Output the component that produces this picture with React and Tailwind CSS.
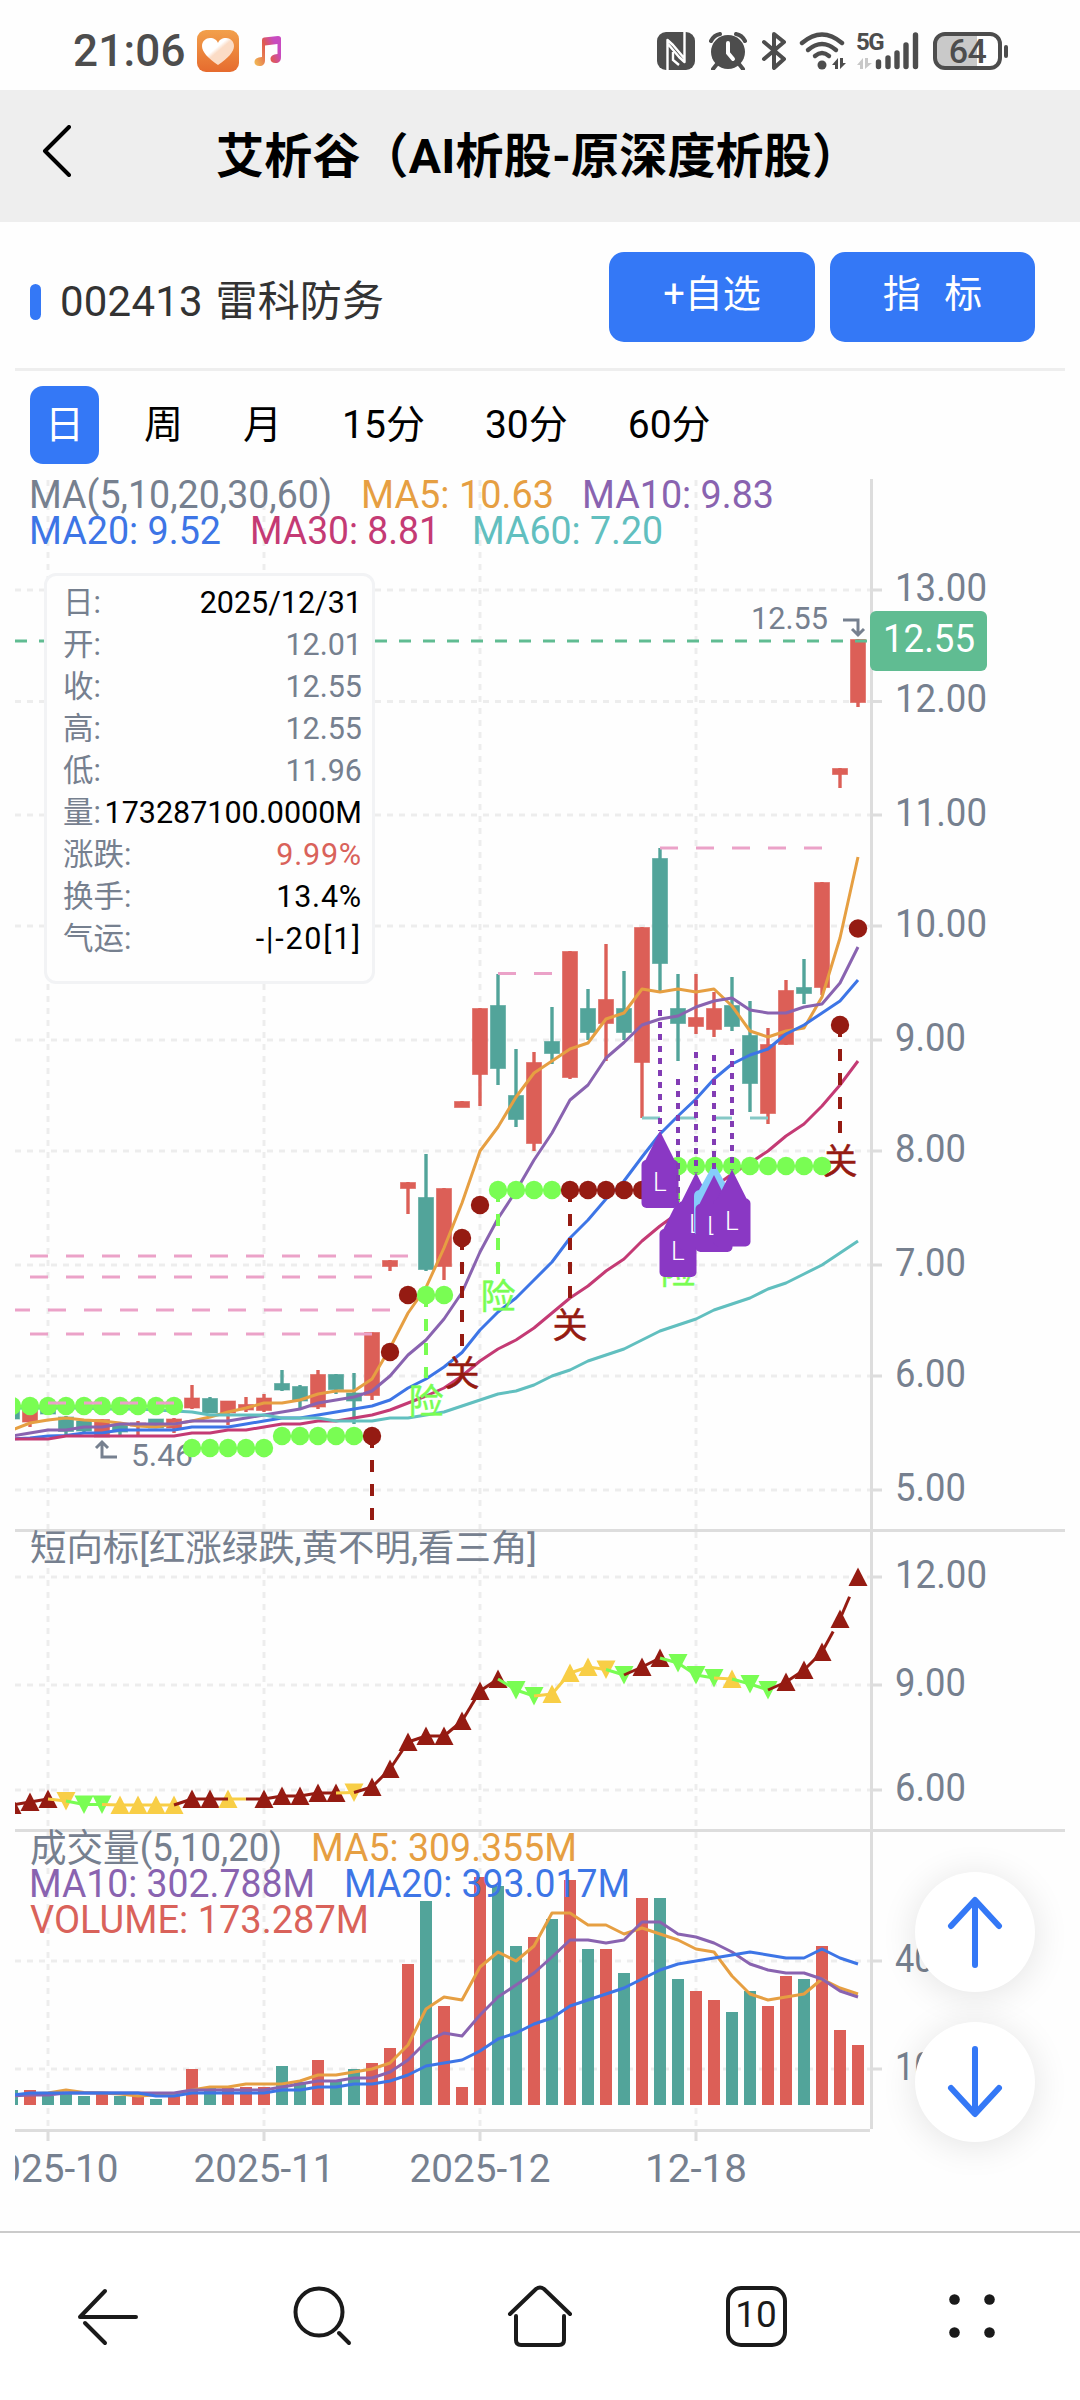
import React from "react";

const UP = "#DC5F57";
const DOWN = "#52A49A";
const AXIS = "#76808F";
const DARK = "#951B12";
const LIME = "#79FD53";
const YELLOW = "#F8CE46";
const PURPLE = "#8A38C4";

const COLORS = {
  ma5: "#E69F42",
  ma10: "#8963B0",
  ma20: "#3D75E6",
  ma30: "#C43A74",
  ma60: "#61BFBF",
};

// first visible bar is index -2, bars are 18px apart
const FIRST = -2;
const barX = (k) => 48 + k * 18;

// [direction, body top, body bottom, high, low]
const CANDLES = [
  ["d", 1408, 1419, 1405, 1419],
  ["u", 1408, 1422, 1405, 1427],
  ["d", 1410, 1414, 1405, 1414],
  ["d", 1417, 1431.5, 1416, 1435],
  ["d", 1421, 1431, 1420, 1432],
  ["u", 1419.5, 1437, 1419, 1437],
  ["d", 1425, 1432, 1424, 1435],
  ["u", 1423, 1426, 1421, 1435],
  ["d", 1419, 1428, 1419, 1428],
  ["u", 1419, 1428, 1418, 1433],
  ["u", 1398, 1408, 1385, 1409],
  ["d", 1398.5, 1413, 1397, 1413],
  ["u", 1401, 1413, 1401, 1425],
  ["u", 1404.5, 1410, 1397, 1412],
  ["u", 1398, 1410.5, 1394, 1412],
  ["d", 1383.5, 1390, 1370, 1391],
  ["d", 1386.5, 1401, 1385, 1408],
  ["u", 1374.5, 1407, 1370, 1409],
  ["d", 1374.5, 1389.5, 1374, 1394],
  ["d", 1393, 1401, 1373, 1424],
  ["u", 1332.5, 1395.5, 1332.5, 1400],
  ["u", 1260.5, 1266.5, 1260, 1271],
  ["u", 1182.5, 1188.5, 1182, 1214],
  ["d", 1197.5, 1269.5, 1154, 1271],
  ["u", 1188.5, 1266.5, 1188, 1280],
  ["u", 1101.5, 1107.5, 1101, 1107],
  ["u", 1008.5, 1074.5, 1008, 1106],
  ["d", 1005.5, 1068.5, 974, 1085],
  ["d", 1095.5, 1119.5, 1049, 1127],
  ["u", 1062.5, 1143.5, 1052, 1151],
  ["d", 1041.5, 1053.5, 1007, 1064],
  ["u", 951.5, 1077.5, 951, 1079],
  ["d", 1008.5, 1032.5, 989, 1040],
  ["u", 999.5, 1023.5, 944, 1061],
  ["d", 1008.5, 1032.5, 971, 1040],
  ["u", 927.5, 1062.5, 927, 1118],
  ["d", 858.5, 963.5, 848, 991],
  ["d", 1008.5, 1023.5, 974, 1061],
  ["u", 1017.5, 1026.5, 974, 1034],
  ["u", 1008.5, 1029.5, 992, 1037],
  ["d", 1005.5, 1026.5, 977, 1031],
  ["d", 1035.5, 1083.5, 1001, 1112],
  ["u", 1044.5, 1113.5, 1028, 1124],
  ["u", 990.5, 1044.5, 980, 1045],
  ["d", 987.5, 993.5, 959, 1004],
  ["u", 882.5, 987.5, 882, 995],
  ["u", 768.5, 774.5, 768, 788],
  ["u", 639.5, 702.5, 639, 707],
];

const PRICE_LINES = {
  ma5: [1430, 1423, 1420, 1418, 1420, 1421, 1423, 1426, 1427, 1424, 1421, 1417, 1412, 1408, 1403, 1403, 1400, 1394, 1391, 1391, 1379, 1348, 1313, 1287.5, 1248, 1203, 1151, 1127, 1097, 1073, 1061, 1049, 1043, 1019, 1013, 989, 992, 989, 992, 989, 1006, 1031, 1037, 1031, 1028, 997, 938, 857],
  ma10: [1436, 1433, 1430, 1430, 1427, 1427, 1424, 1424, 1424, 1424, 1421, 1421, 1421, 1418, 1415, 1412, 1409, 1403, 1400, 1397, 1391, 1376, 1355, 1340, 1319, 1292.5, 1252, 1218.5, 1191, 1160, 1133, 1100, 1085, 1058, 1042.5, 1025, 1019, 1016, 1007, 1001, 998, 1010, 1013, 1013, 1007, 1004, 983, 947],
  ma20: [1439, 1438, 1436, 1435.5, 1433, 1433, 1430, 1430, 1430, 1430, 1427, 1427, 1427, 1424, 1421, 1418, 1418, 1415, 1412, 1409, 1406, 1400, 1388, 1379, 1367, 1352.5, 1330, 1312, 1298, 1280, 1262, 1238, 1220, 1199, 1181, 1157, 1134, 1116, 1099, 1079, 1064, 1055, 1049, 1034, 1025, 1013, 1001, 980],
  ma30: [1439, 1439, 1439, 1436, 1436, 1436, 1436, 1436, 1436, 1436, 1433, 1433, 1430, 1430, 1427, 1424, 1424, 1421, 1421, 1418, 1415, 1410, 1403, 1396, 1388, 1376, 1361, 1349, 1340, 1328, 1313, 1298, 1286, 1271, 1259, 1241, 1226, 1213, 1201, 1187, 1174, 1163, 1151, 1136, 1124, 1106, 1085, 1061],
  ma60: [1408, 1408, 1408, 1408, 1408, 1409, 1409, 1409, 1410, 1411, 1412, 1415, 1415, 1415, 1415, 1418, 1418, 1418, 1421, 1421, 1421, 1418, 1418, 1415, 1412, 1406, 1400, 1394, 1391, 1385, 1376, 1370, 1361, 1355, 1349, 1340, 1331, 1325, 1319, 1310, 1304, 1298, 1289, 1283, 1274, 1265, 1253, 1241],
};

const VOLUMES = [2090, 2090, 2096, 2094, 2096, 2093, 2096, 2096, 2099, 2095, 2069, 2088, 2088, 2087, 2087, 2066, 2082, 2060, 2081, 2069, 2063, 2048, 1964, 1901, 2006, 2087, 1877, 1886, 1946, 1937, 1919, 1880, 1949, 1949, 1973, 1898, 1898, 1979, 1991, 2000, 2012, 1991, 2006, 1976, 1979, 1946, 2030, 2045];

const VOLUME_LINES = {
  ma5: [2096, 2094, 2093, 2090, 2092.5, 2093, 2094, 2096, 2095, 2094, 2090, 2087, 2087, 2084, 2084, 2084, 2081, 2075, 2075, 2072, 2069, 2063, 2045, 2009, 1997, 2000, 1967, 1952, 1961, 1946, 1913, 1913, 1925, 1925, 1934, 1928, 1934, 1940, 1949, 1952, 1976, 1994, 2000, 1997, 1994, 1979, 1988, 1994],
  ma10: [2096, 2095, 2095, 2093, 2093, 2093, 2093, 2093, 2093, 2093, 2090, 2090, 2090, 2090, 2090, 2087, 2084, 2081, 2081, 2078, 2078, 2072, 2060, 2042, 2033, 2036, 2015, 1997, 1985, 1973, 1957, 1940, 1940, 1943, 1940, 1922, 1922, 1934, 1937, 1943, 1952, 1964, 1970, 1973, 1973, 1979, 1991, 1997],
  ma20: [2095, 2093, 2093, 2093, 2093, 2093, 2093, 2093, 2096, 2096, 2093, 2093, 2093, 2093, 2093, 2090, 2090, 2087, 2087, 2084, 2084, 2081, 2075, 2066, 2063, 2060, 2051, 2039, 2033, 2024, 2018, 2006, 2000, 1994, 1988, 1979, 1970, 1964, 1961, 1958, 1955, 1952, 1955, 1958, 1958, 1949, 1958, 1964],
};

// [index, y, color, shape], shape is u / d / empty when there is no marker
const TREND = [
  [-2, 1805, DARK, "u"], [-1, 1802, DARK, "u"], [0, 1799, DARK, "u"], [1, 1801, YELLOW, "d"],
  [2, 1804.5, LIME, "d"], [3, 1804.5, LIME, "d"], [4, 1805, YELLOW, "u"], [5, 1805, YELLOW, "u"],
  [6, 1805, YELLOW, "u"], [7, 1805, YELLOW, "u"], [8, 1799, DARK, "u"], [9, 1799, DARK, "u"],
  [10, 1799, DARK, "u", YELLOW], [11, 1799, YELLOW, ""], [12, 1799, DARK, "u"], [13, 1796, DARK, "u"],
  [14, 1796, DARK, "u"], [15, 1793, DARK, "u"], [16, 1793, DARK, "u"], [17, 1792.5, YELLOW, "d"],
  [18, 1787, DARK, "u"], [19, 1769, DARK, "u"], [20, 1742, DARK, "u"], [21, 1736, DARK, "u"],
  [22, 1736, DARK, "u"], [23, 1721, DARK, "u"], [24, 1691, DARK, "u"], [25, 1679, DARK, "u"],
  [26, 1690, LIME, "d"], [27, 1696, LIME, "d"], [28, 1694, YELLOW, "u"], [29, 1673, YELLOW, "u"],
  [30, 1667, YELLOW, "u"], [31, 1669.5, YELLOW, "d"], [32, 1675, LIME, "d"], [33, 1667, DARK, "u"],
  [34, 1658, DARK, "u"], [35, 1663, LIME, "d"], [36, 1675, LIME, "d"], [37, 1678, LIME, "d"],
  [38, 1679, YELLOW, "u"], [39, 1684, LIME, "d"], [40, 1690, LIME, "d"], [41, 1682, DARK, "u"],
  [42, 1670, DARK, "u"], [43, 1652, DARK, "u"], [44, 1619, DARK, "u"], [45, 1577, DARK, "u"],
];

// [from index, to index, y, color]
const DOTS = [
  [-2, 7, 1406, LIME],
  [8, 12, 1448, LIME],
  [13, 17, 1436, LIME],
  [18, 18, 1436, DARK],
  [19, 19, 1352, DARK],
  [20, 20, 1295, DARK],
  [21, 22, 1295, LIME],
  [23, 23, 1238, DARK],
  [24, 24, 1205, DARK],
  [25, 28, 1190, LIME],
  [29, 34, 1190, DARK],
  [35, 43, 1166, LIME],
  [44, 44, 1025, DARK],
  [45, 45, 928.5, DARK],
];

// [index, line start, line end, label, label baseline, color]
const SIGNALS = [
  [18, 1436, 1520, "", 0, DARK],
  [21, 1295, 1378, "险", 1414, LIME],
  [23, 1238, 1346, "关", 1386, DARK],
  [25, 1190, 1274, "险", 1309, LIME],
  [29, 1190, 1298, "关", 1338, DARK],
  [35, 1166, 1250, "险", 1284, LIME],
  [44, 1025, 1133, "关", 1173.5, DARK],
];

// [x1, x2, y]
const RESISTANCE = [
  [30, 408, 1256],
  [30, 372, 1277],
  [12, 390, 1310],
  [30, 372, 1334],
  [48, 174, 1403],
  [498, 552, 973.5],
  [660, 822, 848],
];

// [index, dash start, tip y]
const TAGS = [
  [34, 1010, 1131],
  [35, 1079, 1200],
  [36, 1052, 1172.5],
  [37, 1055, 1175],
  [38, 1049, 1169.5],
];

const PRICE_AXIS = [
  ["13.00", 590], ["12.00", 701.5], ["11.00", 815], ["10.00", 926],
  ["9.00", 1040], ["8.00", 1151], ["7.00", 1265], ["6.00", 1376], ["5.00", 1490],
];
const TREND_AXIS = [["12.00", 1577], ["9.00", 1685], ["6.00", 1790]];
const VOLUME_AXIS = [["400M", 1961], ["100M", 2069]];
const DATES = [["2025-10", 48], ["2025-11", 264], ["2025-12", 480], ["12-18", 696]];

const DETAILS = [
  ["日:", "2025/12/31", "text-black"],
  ["开:", "12.01", "text-[#76808F]"],
  ["收:", "12.55", "text-[#76808F]"],
  ["高:", "12.55", "text-[#76808F]"],
  ["低:", "11.96", "text-[#76808F]"],
  ["量:", "173287100.0000M", "text-black"],
  ["涨跌:", "9.99%", "text-[#D9625A] tracking-[0.8px]"],
  ["换手:", "13.4%", "text-black tracking-[0.8px]"],
  ["气运:", "-|-20[1]", "text-black tracking-[1.8px]"],
];

const points = (ys) => ys.map((y, i) => `${barX(i + FIRST)},${y}`).join(" ");

function Label({ x, y, w, size = 38, fill = AXIS, children }) {
  return (
    <text x={x} y={y} fontSize={size} fill={fill} textLength={w} lengthAdjust="spacingAndGlyphs">
      {children}
    </text>
  );
}

function Grid({ rows, top, bottom }) {
  return (
    <g stroke="#EDEDED" strokeWidth="3" strokeDasharray="6 6">
      {rows.map(([, y]) => (
        <line key={y} x1="15" x2="870" y1={y} y2={y} />
      ))}
      {DATES.map(([, x]) => (
        <line key={x} x1={x} x2={x} y1={top} y2={bottom} />
      ))}
    </g>
  );
}

function AxisLabels({ rows }) {
  return rows.map(([label, y]) => (
    <g key={y}>
      <line x1="871" x2="882" y1={y} y2={y} stroke="#DDDDDD" strokeWidth="3" />
      <Label x={895} y={y + 10.5} w={label.length === 5 ? 92 : label.length === 4 && !label.includes("M") ? 71 : 88}>
        {label}
      </Label>
    </g>
  ));
}

function Tag({ k, from, tip }) {
  const x = barX(k);
  return (
    <g>
      <line x1={x} x2={x} y1={from} y2={tip} stroke="#823CB4" strokeWidth="4" strokeDasharray="6 6" />
      <path d={`M${x} ${tip}L${x + 15} ${tip + 30}H${x - 15}Z`} fill={PURPLE} />
      <rect x={x - 18.5} y={tip + 29} width="37" height="48" rx="5" fill={PURPLE} />
      <text x={x - 7} y={tip + 60} fontSize="26" fontWeight="300" fill="#fff">L</text>
    </g>
  );
}

function TrendPanel() {
  return (
    <g strokeWidth="3">
      {TREND.map(([k, y, color, shape, own]) => {
        const x = barX(k);
        if (!shape) return null;
        const d = shape === "u"
          ? `M${x} ${y - 9.5}L${x + 9.5} ${y + 9}H${x - 9.5}Z`
          : `M${x} ${y + 9.5}L${x + 9.5} ${y - 9}H${x - 9.5}Z`;
        return <path key={k} d={d} fill={own || color} stroke="none" />;
      })}
      {TREND.slice(1).map(([k, y, color], i) => {
        const prev = TREND[i];
        const part = k === 44 ? 0.62 : k === 45 ? 0.53 : 1;
        return (
          <line
            key={k}
            x1={barX(prev[0])}
            y1={prev[1]}
            x2={barX(prev[0]) + 18 * part}
            y2={prev[1] + (y - prev[1]) * part}
            stroke={color}
          />
        );
      })}
    </g>
  );
}

function Chart() {
  return (
    <svg
      className="block h-[1725px] w-[1050px] font-['Roboto','Noto_Sans_CJK_SC',sans-serif]"
      viewBox="15 475 1050 1725"
    >
      <defs>
        <clipPath id="plot">
          <rect x="15" y="475" width="1050" height="1725" />
        </clipPath>
      </defs>

      <Grid rows={PRICE_AXIS} top={480} bottom={1529} />
      <Grid rows={TREND_AXIS} top={1532} bottom={1829} />
      <Grid rows={VOLUME_AXIS} top={1832} bottom={2129} />

      <g stroke="#DDDDDD" strokeWidth="3">
        <line x1="15" x2="1065" y1="1530.5" y2="1530.5" />
        <line x1="15" x2="1065" y1="1830.5" y2="1830.5" />
        <line x1="15" x2="870" y1="2130.5" y2="2130.5" />
        <line x1="871.5" x2="871.5" y1="479" y2="2129" />
        {DATES.map(([, x]) => (
          <line key={x} x1={x} x2={x} y1="2132" y2="2141" />
        ))}
      </g>

      <AxisLabels rows={PRICE_AXIS} />
      <AxisLabels rows={TREND_AXIS} />
      <AxisLabels rows={VOLUME_AXIS} />

      <g clipPath="url(#plot)">
        {CANDLES.map(([dir, top, bottom, high, low], i) => {
          const x = barX(i + FIRST);
          const color = dir === "u" ? UP : DOWN;
          return (
            <g key={i}>
              <line x1={x} x2={x} y1={high} y2={low} stroke={color} strokeWidth="3.4" />
              <rect x={x - 7.5} y={top} width="15" height={bottom - top} fill={color} stroke={color} strokeOpacity="0.6" />
            </g>
          );
        })}

        <Label x={131} y={1466} w={62} size={31}>5.46</Label>
        <Label x={751} y={629} w={77} size={31}>12.55</Label>
        <g fill="none" stroke={AXIS} strokeWidth="3">
          <path d="M117 1457H102V1442M96 1448L102 1442L108 1448" />
          <path d="M843 620H858V635M852 629L858 635L864 629" />
        </g>

        <g fill="none" strokeWidth="3" strokeLinejoin="round">
          {Object.keys(PRICE_LINES).map((name) => (
            <polyline key={name} points={points(PRICE_LINES[name])} stroke={COLORS[name]} />
          ))}
        </g>

        {SIGNALS.map(([k, from, to, label, base, color]) => (
          <g key={k}>
            <line x1={barX(k)} x2={barX(k)} y1={from} y2={to} stroke={color} strokeWidth="4" strokeDasharray="12 12" />
            <text x={barX(k)} y={base} fontSize="35" textAnchor="middle" fill={color} stroke={color} strokeWidth="0.5">
              {label}
            </text>
          </g>
        ))}

        {DOTS.map(([from, to, y, color]) =>
          Array.from({ length: to - from + 1 }, (_, i) => (
            <circle key={`${from}-${i}`} cx={barX(from + i)} cy={y} r="9.2" fill={color} />
          ))
        )}

        <g stroke="#EBA2C8" strokeWidth="3" strokeDasharray="18 18">
          {RESISTANCE.map(([x1, x2, y]) => (
            <line key={y} x1={x1} x2={x2} y1={y} y2={y} />
          ))}
          <line x1="642" x2="768" y1="1118" y2="1118" stroke="#85C8C6" />
        </g>

        {TAGS.slice(0, 3).map(([k, from, tip]) => (
          <Tag key={k} k={k} from={from} tip={tip} />
        ))}
        <path d="M714 1163L730 1192H732V1235H699Q694 1235 694 1230V1196Q694 1191 699 1190Z" fill="#85CCFA" />
        {TAGS.slice(3).map(([k, from, tip]) => (
          <Tag key={k} k={k} from={from} tip={tip} />
        ))}
      </g>

      <line x1="15" x2="868" y1="641" y2="641" stroke="#60BC92" strokeWidth="3" strokeDasharray="12 12" />
      <rect x="870" y="611" width="117" height="60" rx="6" fill="#60BC92" />
      <Label x={883} y={652} w={92} fill="#fff">12.55</Label>

      <Label x={29} y={508} w={303}>MA(5,10,20,30,60)</Label>
      <Label x={361} y={508} w={193} fill={COLORS.ma5}>MA5: 10.63</Label>
      <Label x={582} y={508} w={192} fill={COLORS.ma10}>MA10: 9.83</Label>
      <Label x={29} y={544} w={192} fill={COLORS.ma20}>MA20: 9.52</Label>
      <Label x={250} y={544} w={190} fill={COLORS.ma30}>MA30: 8.81</Label>
      <Label x={472} y={544} w={191} fill={COLORS.ma60}>MA60: 7.20</Label>

      <Label x={30} y={1561} w={507} size={36}>短向标[红涨绿跌,黄不明,看三角]</Label>
      <g clipPath="url(#plot)">
        <TrendPanel />
      </g>

      <g clipPath="url(#plot)">
        {VOLUMES.map((y, i) => (
          <rect key={i} x={barX(i + FIRST) - 6} y={y} width="12" height={2105 - y} fill={CANDLES[i][0] === "u" ? UP : DOWN} />
        ))}
        <g fill="none" strokeWidth="3" strokeLinejoin="round">
          {Object.keys(VOLUME_LINES).map((name) => (
            <polyline key={name} points={points(VOLUME_LINES[name])} stroke={COLORS[name]} />
          ))}
        </g>
      </g>
      <Label x={30} y={1861} w={252}>成交量(5,10,20)</Label>
      <Label x={311} y={1861} w={266} fill={COLORS.ma5}>MA5: 309.355M</Label>
      <Label x={29} y={1897} w={286} fill={COLORS.ma10}>MA10: 302.788M</Label>
      <Label x={344} y={1897} w={286} fill={COLORS.ma20}>MA20: 393.017M</Label>
      <Label x={30} y={1933} w={339} fill="#D9625A">VOLUME: 173.287M</Label>

      {DATES.map(([label, x]) => {
        const w = label.length === 7 ? 141 : 102;
        return <Label key={label} x={x - w / 2} y={2182} w={w}>{label}</Label>;
      })}
    </svg>
  );
}

function DetailCard() {
  return (
    <div className="absolute left-[29px] top-[98px] h-[411px] w-[331px] rounded-[12px] border-[3px] border-[#F2F3F5] bg-[#FEFEFE] pl-[16px] pr-[10px] pt-[6px]">
      {DETAILS.map(([name, value, tone]) => (
        <div key={name} className="flex h-[42px] items-center justify-between whitespace-nowrap text-[30.5px] leading-[42px]">
          <span className="text-[#76808F]">{name}</span>
          <span className={tone}>{value}</span>
        </div>
      ))}
    </div>
  );
}

function StatusBar() {
  return (
    <div className="flex h-[90px] items-center pt-[12px] pl-[73px] pr-[72px] text-[#4D4D4D]">
      <span className="text-[44px] font-medium leading-none tracking-[0.2px]">21:06</span>
      <svg className="ml-[11px] h-[42px] w-[42px]" viewBox="0 0 42 42">
        <defs>
          <linearGradient id="app" x1="0" y1="0" x2="0" y2="1">
            <stop offset="0" stopColor="#F2A04B" />
            <stop offset="1" stopColor="#E66B2E" />
          </linearGradient>
          <linearGradient id="heart" x1="0" y1="0" x2="1" y2="1">
            <stop offset="0.4" stopColor="#fff" />
            <stop offset="0.5" stopColor="#FBDCC6" />
          </linearGradient>
        </defs>
        <rect width="42" height="42" rx="9" fill="url(#app)" />
        <path d="M21 35C11 28 5 22 5 16C5 11 9 8 13 8C17 8 20 10 21 13C22 10 25 8 29 8C33 8 37 11 37 16C37 22 31 28 21 35Z" fill="url(#heart)" />
      </svg>
      <svg className="ml-[15px] h-[30px] w-[28px]" viewBox="0 0 28 30">
        <defs>
          <linearGradient id="note" x1="0" y1="0.8" x2="1" y2="0.3">
            <stop offset="0" stopColor="#F0B354" />
            <stop offset="0.5" stopColor="#E05A4E" />
            <stop offset="0.85" stopColor="#C84BC0" />
          </linearGradient>
        </defs>
        <path d="M8 4Q8 2 10 1.6L24 0Q27 0 27 2.5V21C27 25 25 27 21.5 27C18.500 27 16.500 25.500 16.500 23C16.500 20 19 18.500 23.500 18V8L11 9.500V24C11 28 9 30 5.500 30C2.500 30 0.500 28.500 0.500 26C0.500 23 3 21.500 8 21Z" fill="url(#note)" />
      </svg>

      <div className="ml-auto flex items-center">
        <svg className="h-[38px] w-[38px]" viewBox="0 0 38 38">
          <rect width="38" height="38" rx="9" fill="currentColor" />
          <path d="M10.500 38V8L16 13L27 26M27.500 0V30L22 25L11 12" fill="none" stroke="#fff" strokeWidth="2.400" strokeLinejoin="round" />
          <path d="M16 20V28L22 33" fill="none" stroke="#fff" strokeWidth="2.400" />
        </svg>
        <svg className="ml-[14px] h-[38px] w-[38px]" viewBox="0 0 38 38">
          <circle cx="19" cy="20" r="17" fill="currentColor" />
          <path d="M2 9Q5 3 11 2M27 2Q33 3 36 9M8 32L4 37M30 32L34 37" fill="none" stroke="currentColor" strokeWidth="4" strokeLinecap="round" />
          <path d="M19 11V21L24 27" fill="none" stroke="#fff" strokeWidth="4" strokeLinecap="round" />
        </svg>
        <svg className="ml-[14px] h-[38px] w-[26px]" viewBox="0 0 26 38">
          <path d="M3 10L23 27L13 36V2L23 10L3 27" fill="none" stroke="currentColor" strokeWidth="4" strokeLinecap="round" strokeLinejoin="round" />
        </svg>
        <svg className="ml-[12px] h-[38px] w-[48px]" viewBox="0 0 48 38">
          <g fill="none" stroke="currentColor" strokeWidth="4.400" strokeLinecap="round">
            <path d="M3 11Q23 -6 43 11" />
            <path d="M9 18Q23 6 37 18" />
            <path d="M16 24Q23 18 30 24" />
          </g>
          <circle cx="23" cy="33" r="4.500" fill="currentColor" />
          <path d="M33 33L39 26V37H36V33ZM41 26V37L47 31H44V26Z" fill="currentColor" />
        </svg>
        <div className="relative ml-[10px] h-[38px] w-[62px]">
          <span className="absolute -left-px top-0 text-[24px] font-bold leading-[20px] tracking-[-1.6px]">5G</span>
          <svg className="h-[38px] w-[62px]" viewBox="0 0 62 38">
            <path d="M0 33L6 26V37H3V33ZM8 26V37L15 31H11V26Z" fill="#C8C8C8" />
            <g stroke="currentColor" strokeWidth="5.400" strokeLinecap="round">
              <path d="M21.500 30V34.500M31 26V34.500M40 21V34.500M49 13V34.500M58.500 3V34.500" />
            </g>
          </svg>
        </div>
        <div className="ml-[14px] flex h-[38px] w-[69px] items-center justify-center rounded-[12px] border-[4px] border-[#4D4D4D] bg-linear-to-r from-[#C9C9C9] from-65% to-white to-65% text-[34px] font-medium leading-none tracking-[-0.5px]">
          64
        </div>
        <div className="ml-[2px] h-[13px] w-[4px] rounded-full bg-[#4D4D4D]" />
      </div>
    </div>
  );
}

function RoundButton({ d }) {
  return (
    <button className="flex h-[120px] w-[120px] items-center justify-center rounded-full bg-white shadow-[0_4px_36px_rgba(0,0,0,0.11)]">
      <svg className="h-[72px] w-[60px]" viewBox="0 0 60 72">
        <path d={d} fill="none" stroke="#3478F6" strokeWidth="6" strokeLinecap="round" strokeLinejoin="round" />
      </svg>
    </button>
  );
}

function BottomNav() {
  return (
    <nav className="flex h-[169px] items-start border-t-2 border-[#CBCBCB] bg-white pt-[49px] text-[#1A1A1A]">
      <div className="flex flex-1 justify-center">
        <svg className="h-[70px] w-[70px]" viewBox="0 0 70 70" fill="none" stroke="currentColor" strokeWidth="4" strokeLinecap="round" strokeLinejoin="round">
          <path d="M63 35H7L32 9M12 41L32 61" />
        </svg>
      </div>
      <div className="flex flex-1 justify-center">
        <svg className="h-[70px] w-[70px]" viewBox="0 0 70 70" fill="none" stroke="currentColor" strokeWidth="4" strokeLinecap="round">
          <circle cx="30" cy="30" r="23.500" />
          <path d="M50 51L60 61" />
        </svg>
      </div>
      <div className="flex flex-1 justify-center">
        <svg className="h-[70px] w-[70px]" viewBox="0 0 70 70" fill="none" stroke="currentColor" strokeWidth="4" strokeLinecap="round" strokeLinejoin="round">
          <path d="M5 32L31 7Q35 4 39 7L65 32" />
          <path d="M11 34V58Q11 63 16 63H54Q59 63 59 58V34" />
        </svg>
      </div>
      <div className="flex flex-1 justify-center">
        <div className="mt-[4px] flex h-[61px] w-[61px] items-center justify-center rounded-[15px] border-[4px] border-[#1A1A1A] pb-[4px] text-[37px] leading-none">
          10
        </div>
      </div>
      <div className="flex flex-1 justify-center">
        <svg className="h-[70px] w-[70px]" viewBox="0 0 70 70" fill="currentColor">
          <circle cx="17.500" cy="17.500" r="5.300" />
          <circle cx="52.500" cy="17.500" r="5.300" />
          <circle cx="17.500" cy="50.500" r="5.300" />
          <circle cx="52.500" cy="50.500" r="5.300" />
        </svg>
      </div>
    </nav>
  );
}

export default function App() {
  return (
    <div className="relative flex h-[2400px] w-[1080px] flex-col overflow-hidden bg-[#FEFEFE] font-['Roboto','Noto_Sans_CJK_SC',sans-serif]">
      <StatusBar />

      <header className="relative flex h-[132px] items-center bg-[#EEEEEE] pl-[42px]">
        <svg className="mb-[10px] h-[52px] w-[30px]" viewBox="0 0 30 52" fill="none" stroke="#000" strokeWidth="4" strokeLinecap="round" strokeLinejoin="round">
          <path d="M27 2L3 26L27 50" />
        </svg>
        <h1 className="ml-[144px] mt-[2px] whitespace-nowrap text-[48px] font-bold leading-none tracking-[0.2px] text-black">
          艾析谷（AI析股-原深度析股）
        </h1>
      </header>

      <main className="flex flex-1 flex-col px-[15px]">
        <section className="flex h-[149px] items-start border-b-[3px] border-[#EEEEEE] pl-[15px] pr-[30px] pt-[30px]">
          <div className="mt-[32px] h-[36px] w-[11px] rounded-full bg-[#3478F6]" />
          <h2 className="ml-[19px] mt-[25px] whitespace-nowrap text-[42px] leading-[50px] tracking-[0.2px] text-[#333333] [word-spacing:2px]">
            002413 雷科防务
          </h2>
          <div className="ml-auto flex gap-[15px] text-[38px] text-white">
            <button className="h-[90px] w-[206px] rounded-[15px] bg-[#3478F6] pb-[5px]">+自选</button>
            <button className="h-[90px] w-[205px] whitespace-pre rounded-[15px] bg-[#3478F6] pb-[5px] [word-spacing:14px]">指 标</button>
          </div>
        </section>

        <div className="flex h-[104px] items-start gap-[30px] pl-[15px] pt-[15px] text-[39px] leading-[78px] text-black">
          <span className="rounded-[13px] bg-[#3478F6] px-[15px] text-white">日</span>
          <span className="px-[15px]">周</span>
          <span className="px-[15px]">月</span>
          <span className="px-[15px]">15分</span>
          <span className="px-[15px]">30分</span>
          <span className="px-[15px]">60分</span>
        </div>

        <div className="relative">
          <Chart />
          <DetailCard />
        </div>
      </main>

      <div className="absolute right-[45px] top-[1872px] flex flex-col gap-[30px]">
        <RoundButton d="M30 69V6M6 30L30 4L54 30" />
        <RoundButton d="M30 3V66M6 42L30 68L54 42" />
      </div>

      <BottomNav />
    </div>
  );
}
